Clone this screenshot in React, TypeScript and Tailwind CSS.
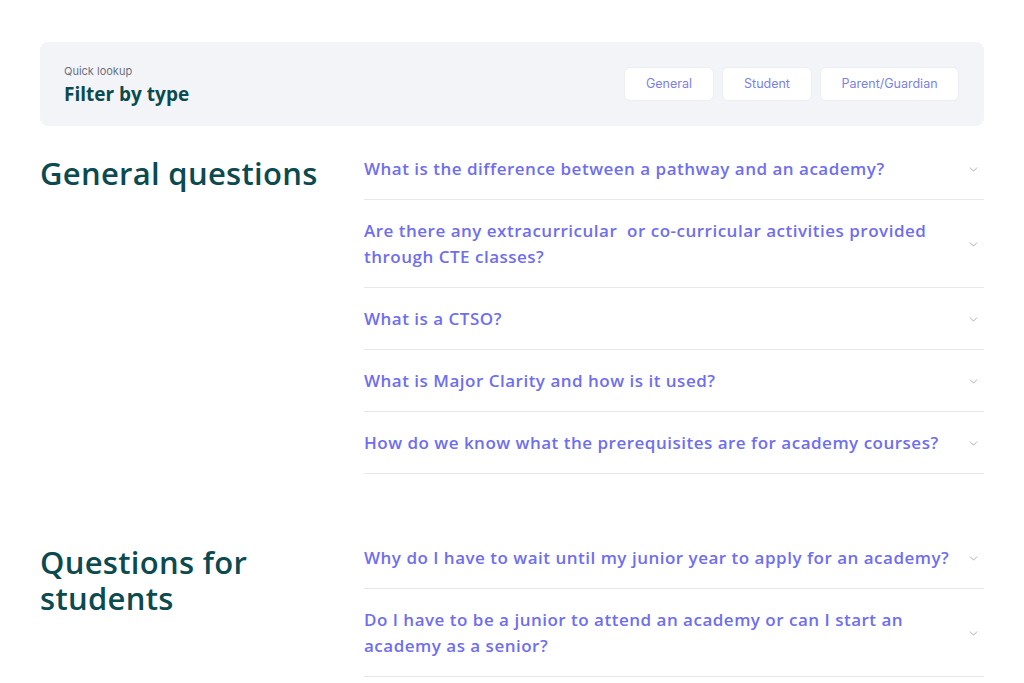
import React from 'react';
import { ChevronDown } from 'lucide-react';

const sections = [
  {
    title: ['General questions'],
    items: [
      'What is the difference between a pathway and an academy?',
      'Are there any extracurricular  or co-curricular activities provided through CTE classes?',
      'What is a CTSO?',
      'What is Major Clarity and how is it used?',
      'How do we know what the prerequisites are for academy courses?',
    ],
  },
  {
    title: ['Questions for', 'students'],
    items: [
      'Why do I have to wait until my junior year to apply for an academy?',
      'Do I have to be a junior to attend an academy or can I start an academy as a senior?',
    ],
  },
];

const heading = { fontFamily: '"Open Sans", "Noto Sans", sans-serif' };

export default function App() {
  return (
    <div className="min-h-screen bg-white px-10 pt-[42px]" style={heading}>
      <div className="flex h-[84px] items-center justify-between rounded-lg bg-[#f3f4f8] pl-6 pr-[25px]">
        <div className="flex flex-col">
          <span className="text-[11px] leading-4 text-[#6b7280] font-['Inter',sans-serif]">Quick lookup</span>
          <span className="mt-[3px] text-[19px] font-bold leading-6 text-[#0b4a4f]">Filter by type</span>
        </div>
        <div className="flex gap-2 font-['Inter',sans-serif]">
          {['General', 'Student', 'Parent/Guardian'].map((b, i) => (
            <button
              key={b}
              className={`h-[34px] rounded-md border border-[#eceef3] bg-white text-[12.5px] text-[#7b7fe8] ${
                i === 2 ? 'w-[139px]' : 'w-[90px]'
              }`}
            >
              {b}
            </button>
          ))}
        </div>
      </div>

      {sections.map((s, si) => (
        <div key={si} className={`grid grid-cols-[324px_1fr] ${si === 0 ? 'mt-3' : 'mt-[53px]'}`}>
          <h2 className="mt-[17px] text-[31px] font-semibold leading-[36px] tracking-[0.3px] text-[#0b4a4f]">
            {s.title.map((t) => (
              <div key={t}>{t}</div>
            ))}
          </h2>
          <div className="flex flex-col">
            {s.items.map((q) => (
              <div
                key={q}
                className="flex items-center justify-between border-b border-[#e5e7eb] pt-[18px] pb-[17px] pr-1"
              >
                <span className="max-w-[600px] whitespace-pre-wrap text-[17px] font-semibold leading-[26px] tracking-[0.5px] text-[#6f6ef0]">
                  {q}
                </span>
                <ChevronDown size={13} strokeWidth={1.5} className="shrink-0 text-[#9a9aa2]" />
              </div>
            ))}
          </div>
        </div>
      ))}
    </div>
  );
}
